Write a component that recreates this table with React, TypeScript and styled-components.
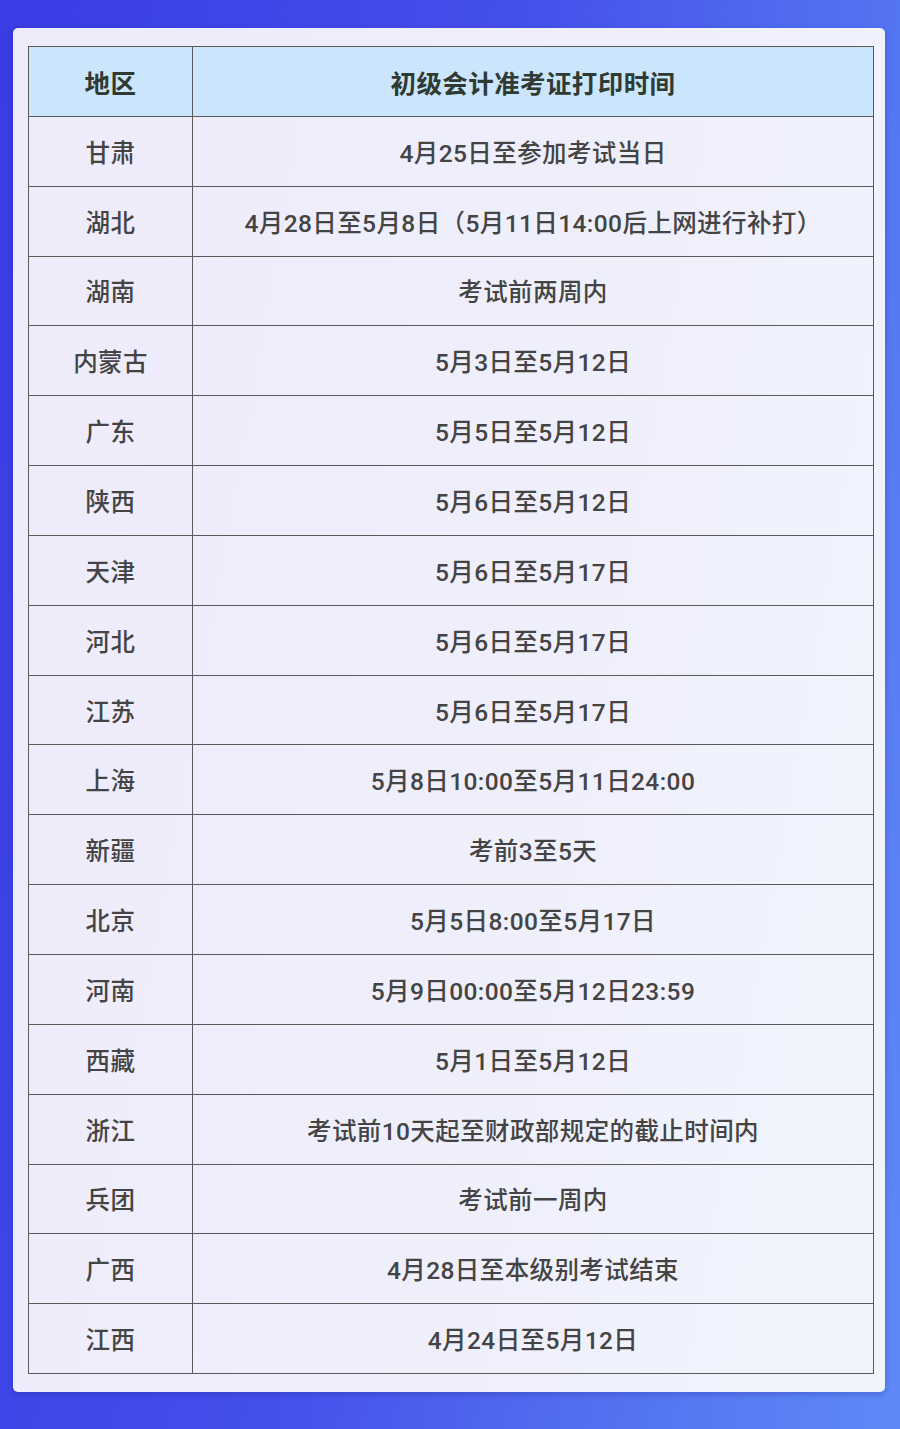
import * as React from 'react';
import styled, {createGlobalStyle} from 'styled-components';

const GlobalStyle = createGlobalStyle`
  html, body {
    margin: 0;
    padding: 0;
  }
  body {
    font-family: Roboto, "Noto Sans CJK SC", sans-serif;
  }
`;

const Page = styled.div`
  width: 900px;
  height: 1429px;
  box-sizing: border-box;
  padding: 28px 15px 0 13px;
  background: linear-gradient(100deg, #3a3ce4 0%, #4450ea 45%, #5577f2 80%, #6089f7 100%);
  overflow: hidden;
`;

const Card = styled.div`
  width: 872px;
  height: 1364px;
  box-sizing: border-box;
  padding: 18px 11px 0 15px;
  border-radius: 5px;
  background: linear-gradient(100deg, #eeebfb 0%, #efeffc 55%, #f1f4fd 100%);
  box-shadow: 0 2px 6px rgba(20, 20, 120, 0.25);
`;

const Table = styled.div`
  display: grid;
  grid-template-columns: 164px 1fr;
  grid-auto-rows: 69.85px;
  border-top: 1.5px solid #5a5a5a;
  border-left: 1.5px solid #5a5a5a;
`;

const Cell = styled.div<{ $head?: boolean }>`
  display: flex;
  align-items: center;
  justify-content: center;
  box-sizing: border-box;
  border-right: 1.5px solid #5a5a5a;
  border-bottom: 1.5px solid #5a5a5a;
  background: ${p => (p.$head ? '#cbe5fc' : 'transparent')};
  color: ${p => (p.$head ? '#2f3a33' : '#444444')};
  font-size: ${p => (p.$head ? '25.5px' : '24.5px')};
  font-weight: ${p => (p.$head ? 700 : 500)};
  letter-spacing: 0.4px;
  white-space: nowrap;
`;

const rows: [string, string][] = [
  ['甘肃', '4月25日至参加考试当日'],
  ['湖北', '4月28日至5月8日（5月11日14:00后上网进行补打）'],
  ['湖南', '考试前两周内'],
  ['内蒙古', '5月3日至5月12日'],
  ['广东', '5月5日至5月12日'],
  ['陕西', '5月6日至5月12日'],
  ['天津', '5月6日至5月17日'],
  ['河北', '5月6日至5月17日'],
  ['江苏', '5月6日至5月17日'],
  ['上海', '5月8日10:00至5月11日24:00'],
  ['新疆', '考前3至5天'],
  ['北京', '5月5日8:00至5月17日'],
  ['河南', '5月9日00:00至5月12日23:59'],
  ['西藏', '5月1日至5月12日'],
  ['浙江', '考试前10天起至财政部规定的截止时间内'],
  ['兵团', '考试前一周内'],
  ['广西', '4月28日至本级别考试结束'],
  ['江西', '4月24日至5月12日'],
];

export default function App() {
  return (
    <>
      <GlobalStyle />
      <Page>
        <Card>
          <Table>
            <Cell $head>地区</Cell>
            <Cell $head>初级会计准考证打印时间</Cell>
            {rows.map(([area, time]) => (
              <React.Fragment key={area}>
                <Cell>{area}</Cell>
                <Cell>{time}</Cell>
              </React.Fragment>
            ))}
          </Table>
        </Card>
      </Page>
    </>
  );
}
